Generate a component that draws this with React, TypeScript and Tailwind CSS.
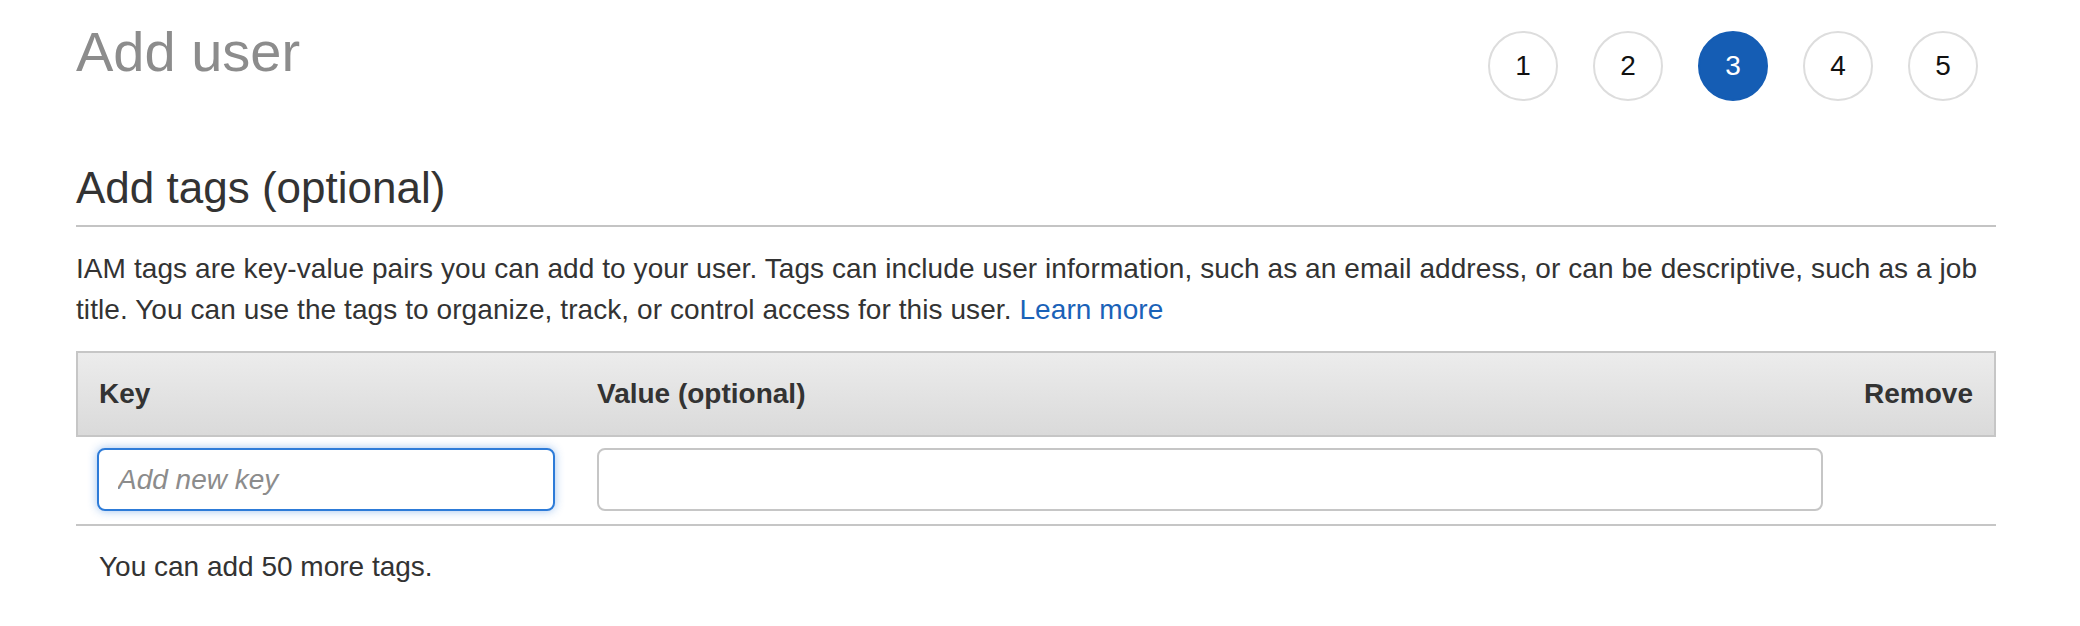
export default function App() {
  const steps = [1, 2, 3, 4, 5];
  const current = 3;

  return (
    <div
      className="min-h-[626px] bg-white pl-[76px] pr-[84px] pt-[20px] text-[#333]"
      style={{ fontFamily: '"Liberation Sans", Arial, Helvetica, sans-serif' }}
    >
      {/* Page title + wizard steps */}
      <div className="flex items-start justify-between">
        <h1 className="text-[56px] leading-[64px] font-normal text-[#8c8c8c]">Add user</h1>
        <ol className="mt-[11px] mr-[18px] flex gap-[35px]">
          {steps.map((s) => (
            <li
              key={s}
              className={
                s === current
                  ? "flex h-[70px] w-[70px] items-center justify-center rounded-full border-2 border-[#155db4] bg-[#155db4] text-[28px] text-white"
                  : "flex h-[70px] w-[70px] items-center justify-center rounded-full border-2 border-[#dddddd] bg-white text-[28px] text-[#111]"
              }
            >
              {s}
            </li>
          ))}
        </ol>
      </div>

      {/* Section heading */}
      <h2 className="mt-[61px] border-b-2 border-[#c4c4c4] pb-[11px] text-[44px] leading-[52px] font-normal text-[#333]">
        Add tags (optional)
      </h2>

      <p className="mt-[21px] text-[28px] leading-[41px] tracking-[0.08px] text-[#333]">
        IAM tags are key-value pairs you can add to your user. Tags can include user information, such as an email
        address, or can be descriptive, such as a job title. You can use the tags to organize, track, or control access
        for this user. <span className="text-[#1a62b8]">Learn more</span>
      </p>

      {/* Tags table */}
      <div className="mt-[21px]">
        <div className="grid h-[86px] grid-cols-[498px_1fr_150px] items-center border-2 border-[#c6c6c6] bg-gradient-to-b from-[#ececec] to-[#dadada] text-[28px] font-bold text-[#333]">
          <div className="pl-[21px]">Key</div>
          <div className="pl-[21px]">Value (optional)</div>
          <div className="pr-[21px] text-right">Remove</div>
        </div>
        <div className="grid grid-cols-[500px_1fr_152px] border-b-2 border-[#c6c6c6] pt-[11px] pb-[13px]">
          <div className="px-[21px]">
            <input
              placeholder="Add new key"
              className="h-[63px] w-full rounded-[8px] border-2 border-[#2d7bd8] bg-white px-[19px] text-[28px] italic text-[#333] shadow-[0_0_10px_rgba(40,120,220,0.45)] outline-none placeholder:text-[#8c8c8c]"
            />
          </div>
          <div className="px-[21px]">
            <input className="h-[63px] w-full rounded-[8px] border-2 border-[#c6c6c6] bg-white px-[19px] text-[28px] text-[#333] outline-none" />
          </div>
          <div />
        </div>
      </div>

      <p className="mt-[21px] pl-[23px] text-[28px] leading-[40px] text-[#333]">You can add 50 more tags.</p>
    </div>
  );
}
